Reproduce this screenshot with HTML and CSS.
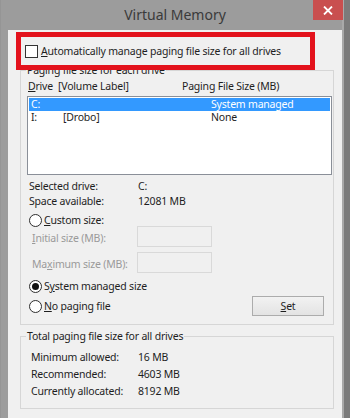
FILE: index.html
```html
<!DOCTYPE html>
<html>
<head>
<meta charset="utf-8">
<link rel="stylesheet" href="styles.css">
</head>
<body>
<div class="window">
  <div class="titlebar">
    <span></span>
    <div class="title">Virtual Memory</div>
    <div class="close">
      <svg width="10" height="9" viewBox="0 0 10 9"><path d="M1 0.5 L9 8.5 M9 0.5 L1 8.5" stroke="#fff" stroke-width="1.8"/></svg>
    </div>
  </div>
  <div class="frame">
    <div class="client">
      <div class="auto-row">
        <span class="checkbox"></span>
        <span><u>A</u>utomatically manage paging file size for all drives</span>
      </div>
      <div class="highlight"></div>

      <div class="group group-drives">
        <div class="group-title">Paging file size for each drive</div>
        <div class="list-header">
          <span class="col-drive"><u>D</u>rive&nbsp; [Volume Label]</span>
          <span>Paging File Size (MB)</span>
        </div>
        <div class="listbox">
          <div class="list-row selected"><span class="c1">C:</span><span class="c2"></span><span class="c3">System managed</span></div>
          <div class="list-row"><span class="c1">I:</span><span class="c2">[Drobo]</span><span class="c3">None</span></div>
        </div>
        <div class="info-row"><span class="info-label">Selected drive:</span><span>C:</span></div>
        <div class="info-row"><span class="info-label">Space available:</span><span>12081 MB</span></div>
        <div class="radio-row custom"><span class="radio"></span><span><u>C</u>ustom size:</span></div>
        <div class="field-row first">
          <span class="field-label"><u>I</u>nitial size (MB):</span>
          <span class="textbox"></span>
        </div>
        <div class="field-row">
          <span class="field-label">Ma<u>x</u>imum size (MB):</span>
          <span class="textbox"></span>
        </div>
        <div class="radio-row sys"><span class="radio checked"></span><span>S<u>y</u>stem managed size</span></div>
        <div class="set-row">
          <div class="radio-row nopage"><span class="radio"></span><span><u>N</u>o paging file</span></div>
          <div class="button"><u>S</u>et</div>
        </div>
      </div>

      <div class="group group-total">
        <div class="group-title">Total paging file size for all drives</div>
        <div class="total-row"><span class="total-label">Minimum allowed:</span><span>16 MB</span></div>
        <div class="total-row"><span class="total-label">Recommended:</span><span>4603 MB</span></div>
        <div class="total-row"><span class="total-label">Currently allocated:</span><span>8192 MB</span></div>
      </div>
    </div>
  </div>
</div>
</body>
</html>
```
FILE: styles.css
```css
* { box-sizing: border-box; }
html, body {
  margin: 0;
  padding: 0;
  width: 350px;
  height: 418px;
  overflow: hidden;
}
body {
  font-family: "Noto Sans", "Open Sans", sans-serif;
  font-size: 10.5px;
  letter-spacing: -0.2px;
  color: #1e1e1e;
  background: #9c9c9c;
}
u { text-decoration: underline; text-underline-offset: 1px; }
.window {
  width: 350px;
  height: 418px;
  display: flex;
  flex-direction: column;
  background: linear-gradient(to right, #8e8e8e 0, #9c9c9c 1px, #9c9c9c 342px, #a9a9a9 342px, #a9a9a9 344px, #7b7b7b 344px);
}
.titlebar {
  height: 30px;
  display: grid;
  grid-template-columns: 1fr auto 1fr;
  align-items: start;
}
.title {
  font-size: 14px;
  letter-spacing: 0;
  color: #3a3a3a;
  line-height: 30px;
}
.close {
  justify-self: end;
  margin-right: 7px;
  width: 30px;
  height: 20px;
  background: #c94f4f;
  display: flex;
  align-items: center;
  justify-content: center;
}
.frame {
  flex: 1;
  padding: 0 8px 0 8px;
  display: flex;
}
.client {
  flex: 1;
  background: #f0f0f0;
  position: relative;
}
.auto-row {
  margin-top: 14px;
  margin-left: 17px;
  height: 14px;
  display: flex;
  align-items: center;
  gap: 3px;
  line-height: 14px;
}
.checkbox {
  width: 13px;
  height: 13px;
  border: 1px solid #333;
  background: #fff;
  flex: none;
}
.highlight {
  position: absolute;
  left: 8px;
  top: 2px;
  width: 299px;
  height: 38px;
  border: 5px solid #e3121c;
  z-index: 2;
}
.group {
  margin-left: 12px;
  width: 314px;
  border: 1px solid #d6d6d6;
  display: flex;
  flex-direction: column;
}
.group-drives {
  margin-top: 12px;
  height: 255px;
}
.group-title {
  align-self: flex-start;
  margin-top: -8px;
  margin-left: 5px;
  padding: 0 1px;
  line-height: 14px;
  height: 14px;
  background: #f0f0f0;
}
.list-header {
  margin-top: 2px;
  padding-left: 7px;
  height: 14px;
  line-height: 14px;
  display: flex;
}
.col-drive { width: 154px; }
.listbox {
  margin-top: 3px;
  margin-left: 6px;
  width: 305px;
  height: 79px;
  border: 1px solid #8a8f98;
  background: #fff;
  padding: 1px 1px 0 1px;
}
.list-row {
  height: 13px;
  line-height: 13px;
  display: flex;
}
.list-row.selected {
  background: #3399ff;
  color: #fff;
}
.list-row .c1 { width: 34px; padding-left: 2px; }
.list-row .c2 { width: 148px; }
.info-row {
  height: 15px;
  line-height: 15px;
  padding-left: 8px;
  display: flex;
}
.listbox + .info-row { margin-top: 4px; }
.info-label { width: 109px; }
.radio-row {
  display: flex;
  align-items: center;
  gap: 2px;
  height: 13px;
  line-height: 13px;
  padding-left: 8px;
}
.radio {
  width: 13px;
  height: 13px;
  border: 1px solid #2e2e2e;
  border-radius: 50%;
  background: #fff;
  flex: none;
  display: flex;
  align-items: center;
  justify-content: center;
}
.radio.checked::after {
  content: "";
  width: 7px;
  height: 7px;
  border-radius: 50%;
  background: #111;
}
.radio-row.custom { margin-top: 5px; }
.field-row {
  display: flex;
  align-items: center;
  margin-top: 5px;
  padding-left: 11px;
  color: #9a9a9a;
}
.field-row.first { margin-top: -1px; }
.field-label {
  width: 105px;
  padding-top: 3px;
}
.textbox {
  width: 75px;
  height: 21px;
  border: 1px solid #d9d9d9;
  background: #f0f0f0;
}
.radio-row.sys { margin-top: 6px; height: 14px; }
.set-row {
  margin-top: 3px;
  height: 20px;
  display: flex;
  align-items: center;
  justify-content: space-between;
  padding-right: 9px;
}
.set-row .radio-row { padding-left: 8px; }
.button {
  width: 72px;
  height: 20px;
  border: 1px solid #acacac;
  background: linear-gradient(#f2f2f2, #e3e3e3);
  display: flex;
  align-items: center;
  justify-content: center;
  line-height: 14px;
}
.group-total {
  margin-top: 11px;
  height: 73px;
}
.total-row {
  height: 17px;
  line-height: 17px;
  padding-left: 10px;
  display: flex;
}
.group-title + .total-row { margin-top: 6px; }
.total-label { width: 107px; }
```
